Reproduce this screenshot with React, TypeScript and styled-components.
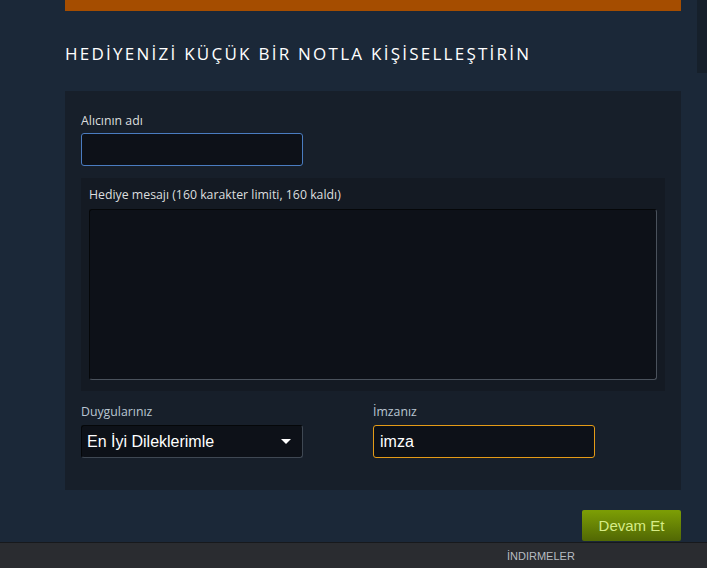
import React from "react";
import styled, { createGlobalStyle } from "styled-components";

const colors = {
  page: "#1b2838",
  panel: "#171f2a",
  inset: "#141a23",
  field: "#0d1118",
  accent: "#a54d00",
  label: "#dcdedf",
  labelSoft: "#b9c6d2",
};

const GlobalStyle = createGlobalStyle`
  html, body {
    margin: 0;
    padding: 0;
    height: 100%;
    background: ${colors.page};
    overflow: hidden;
  }
  #root {
    height: 100%;
  }
`;

const Shell = styled.div`
  position: relative;
  height: 568px;
  display: flex;
  flex-direction: column;
`;

const Content = styled.main`
  flex: 1;
  min-height: 0;
  padding: 0 26px 0 65px;
  display: flex;
  flex-direction: column;
  width: 616px;
`;

const AccentBar = styled.div`
  height: 11px;
  background: ${colors.accent};
`;

const Heading = styled.h2`
  margin: 32px 0 0;
  font-family: "Open Sans", "DejaVu Sans", sans-serif;
  font-weight: 400;
  font-size: 17px;
  line-height: 21px;
  letter-spacing: 2.25px;
  color: #ffffff;
  text-transform: uppercase;
`;

const Panel = styled.section`
  margin-top: 27px;
  background: ${colors.panel};
  padding: 22px 16px 32px;
  display: flex;
  flex-direction: column;
`;

const Label = styled.label<{ soft?: boolean }>`
  display: block;
  font-family: "Open Sans", "DejaVu Sans", sans-serif;
  font-size: 12.3px;
  line-height: 16px;
  color: ${({ soft }) => (soft ? colors.labelSoft : colors.label)};
  margin-bottom: ${({ soft }) => (soft ? "5px" : "4px")};
`;

const TextInput = styled.input<{ tone: "blue" | "orange" }>`
  box-sizing: border-box;
  width: 222px;
  height: 33px;
  padding: 0 6px;
  background: ${colors.field};
  border: 1px solid ${({ tone }) => (tone === "blue" ? "#4a7cc0" : "#e49b17")};
  border-radius: 3px;
  outline: none;
  color: #ffffff;
  font-family: "Liberation Sans", Arial, sans-serif;
  font-size: 16px;
`;

const MessageBox = styled.div`
  margin-top: 12px;
  background: ${colors.inset};
  padding: 9px 8px 11px;
`;

const MessageArea = styled.textarea`
  display: block;
  box-sizing: border-box;
  width: 100%;
  height: 171px;
  margin-top: 6px;
  resize: none;
  background: ${colors.field};
  border: 1px solid #050709;
  border-right-color: #4a525c;
  border-bottom-color: #4a525c;
  border-radius: 3px;
  outline: none;
  color: #ffffff;
`;

const FieldRow = styled.div`
  margin-top: 13px;
  display: grid;
  grid-template-columns: 222px 222px;
  column-gap: 70px;
`;

const Field = styled.div`
  display: flex;
  flex-direction: column;
`;

const Select = styled.div`
  box-sizing: border-box;
  width: 222px;
  height: 33px;
  padding: 0 9px 0 5px;
  display: flex;
  align-items: center;
  justify-content: space-between;
  background: ${colors.field};
  border: 1px solid #050709;
  border-right-color: #3f4853;
  border-bottom-color: #3f4853;
  border-radius: 3px;
  color: #ffffff;
  font-family: "Liberation Sans", Arial, sans-serif;
  font-size: 16px;
`;

const Caret = styled.span`
  width: 0;
  height: 0;
  border-left: 5px solid transparent;
  border-right: 5px solid transparent;
  border-top: 5px solid #ffffff;
  margin-right: 2px;
`;

const Actions = styled.div`
  display: flex;
  justify-content: flex-end;
  margin-top: 20px;
`;

const GreenButton = styled.button`
  width: 99px;
  height: 31px;
  border: none;
  border-radius: 2px;
  background: linear-gradient(to bottom, #7b9c05 5%, #536a04 95%);
  color: #d6ec86;
  font-family: "Liberation Sans", Arial, sans-serif;
  font-size: 15px;
  padding: 0 0 1px;
  cursor: pointer;
`;

const Footer = styled.footer`
  flex-shrink: 0;
  height: 25px;
  border-top: 1px solid #17191c;
  background: #2a2c30;
  display: flex;
  align-items: center;
  padding-left: 507px;
  font-family: "Liberation Sans", Arial, sans-serif;
  font-size: 11px;
  color: #b7bcc2;
`;

const ScrollThumb = styled.div`
  position: absolute;
  top: 0;
  right: 0;
  width: 10px;
  height: 73px;
  background: #16202b;
`;

export default function App() {
  return (
    <>
      <GlobalStyle />
      <Shell>
        <Content>
          <AccentBar />
          <Heading>HEDİYENİZİ KÜÇÜK BİR NOTLA KİŞİSELLEŞTİRİN</Heading>
          <Panel>
            <Label>Alıcının adı</Label>
            <TextInput tone="blue" />
            <MessageBox>
              <Label>Hediye mesajı (160 karakter limiti, 160 kaldı)</Label>
              <MessageArea />
            </MessageBox>
            <FieldRow>
              <Field>
                <Label soft>Duygularınız</Label>
                <Select>
                  <span>En İyi Dileklerimle</span>
                  <Caret />
                </Select>
              </Field>
              <Field>
                <Label soft>İmzanız</Label>
                <TextInput tone="orange" defaultValue="imza" />
              </Field>
            </FieldRow>
          </Panel>
          <Actions>
            <GreenButton>Devam Et</GreenButton>
          </Actions>
        </Content>
        <Footer>İNDIRMELER</Footer>
        <ScrollThumb />
      </Shell>
    </>
  );
}
